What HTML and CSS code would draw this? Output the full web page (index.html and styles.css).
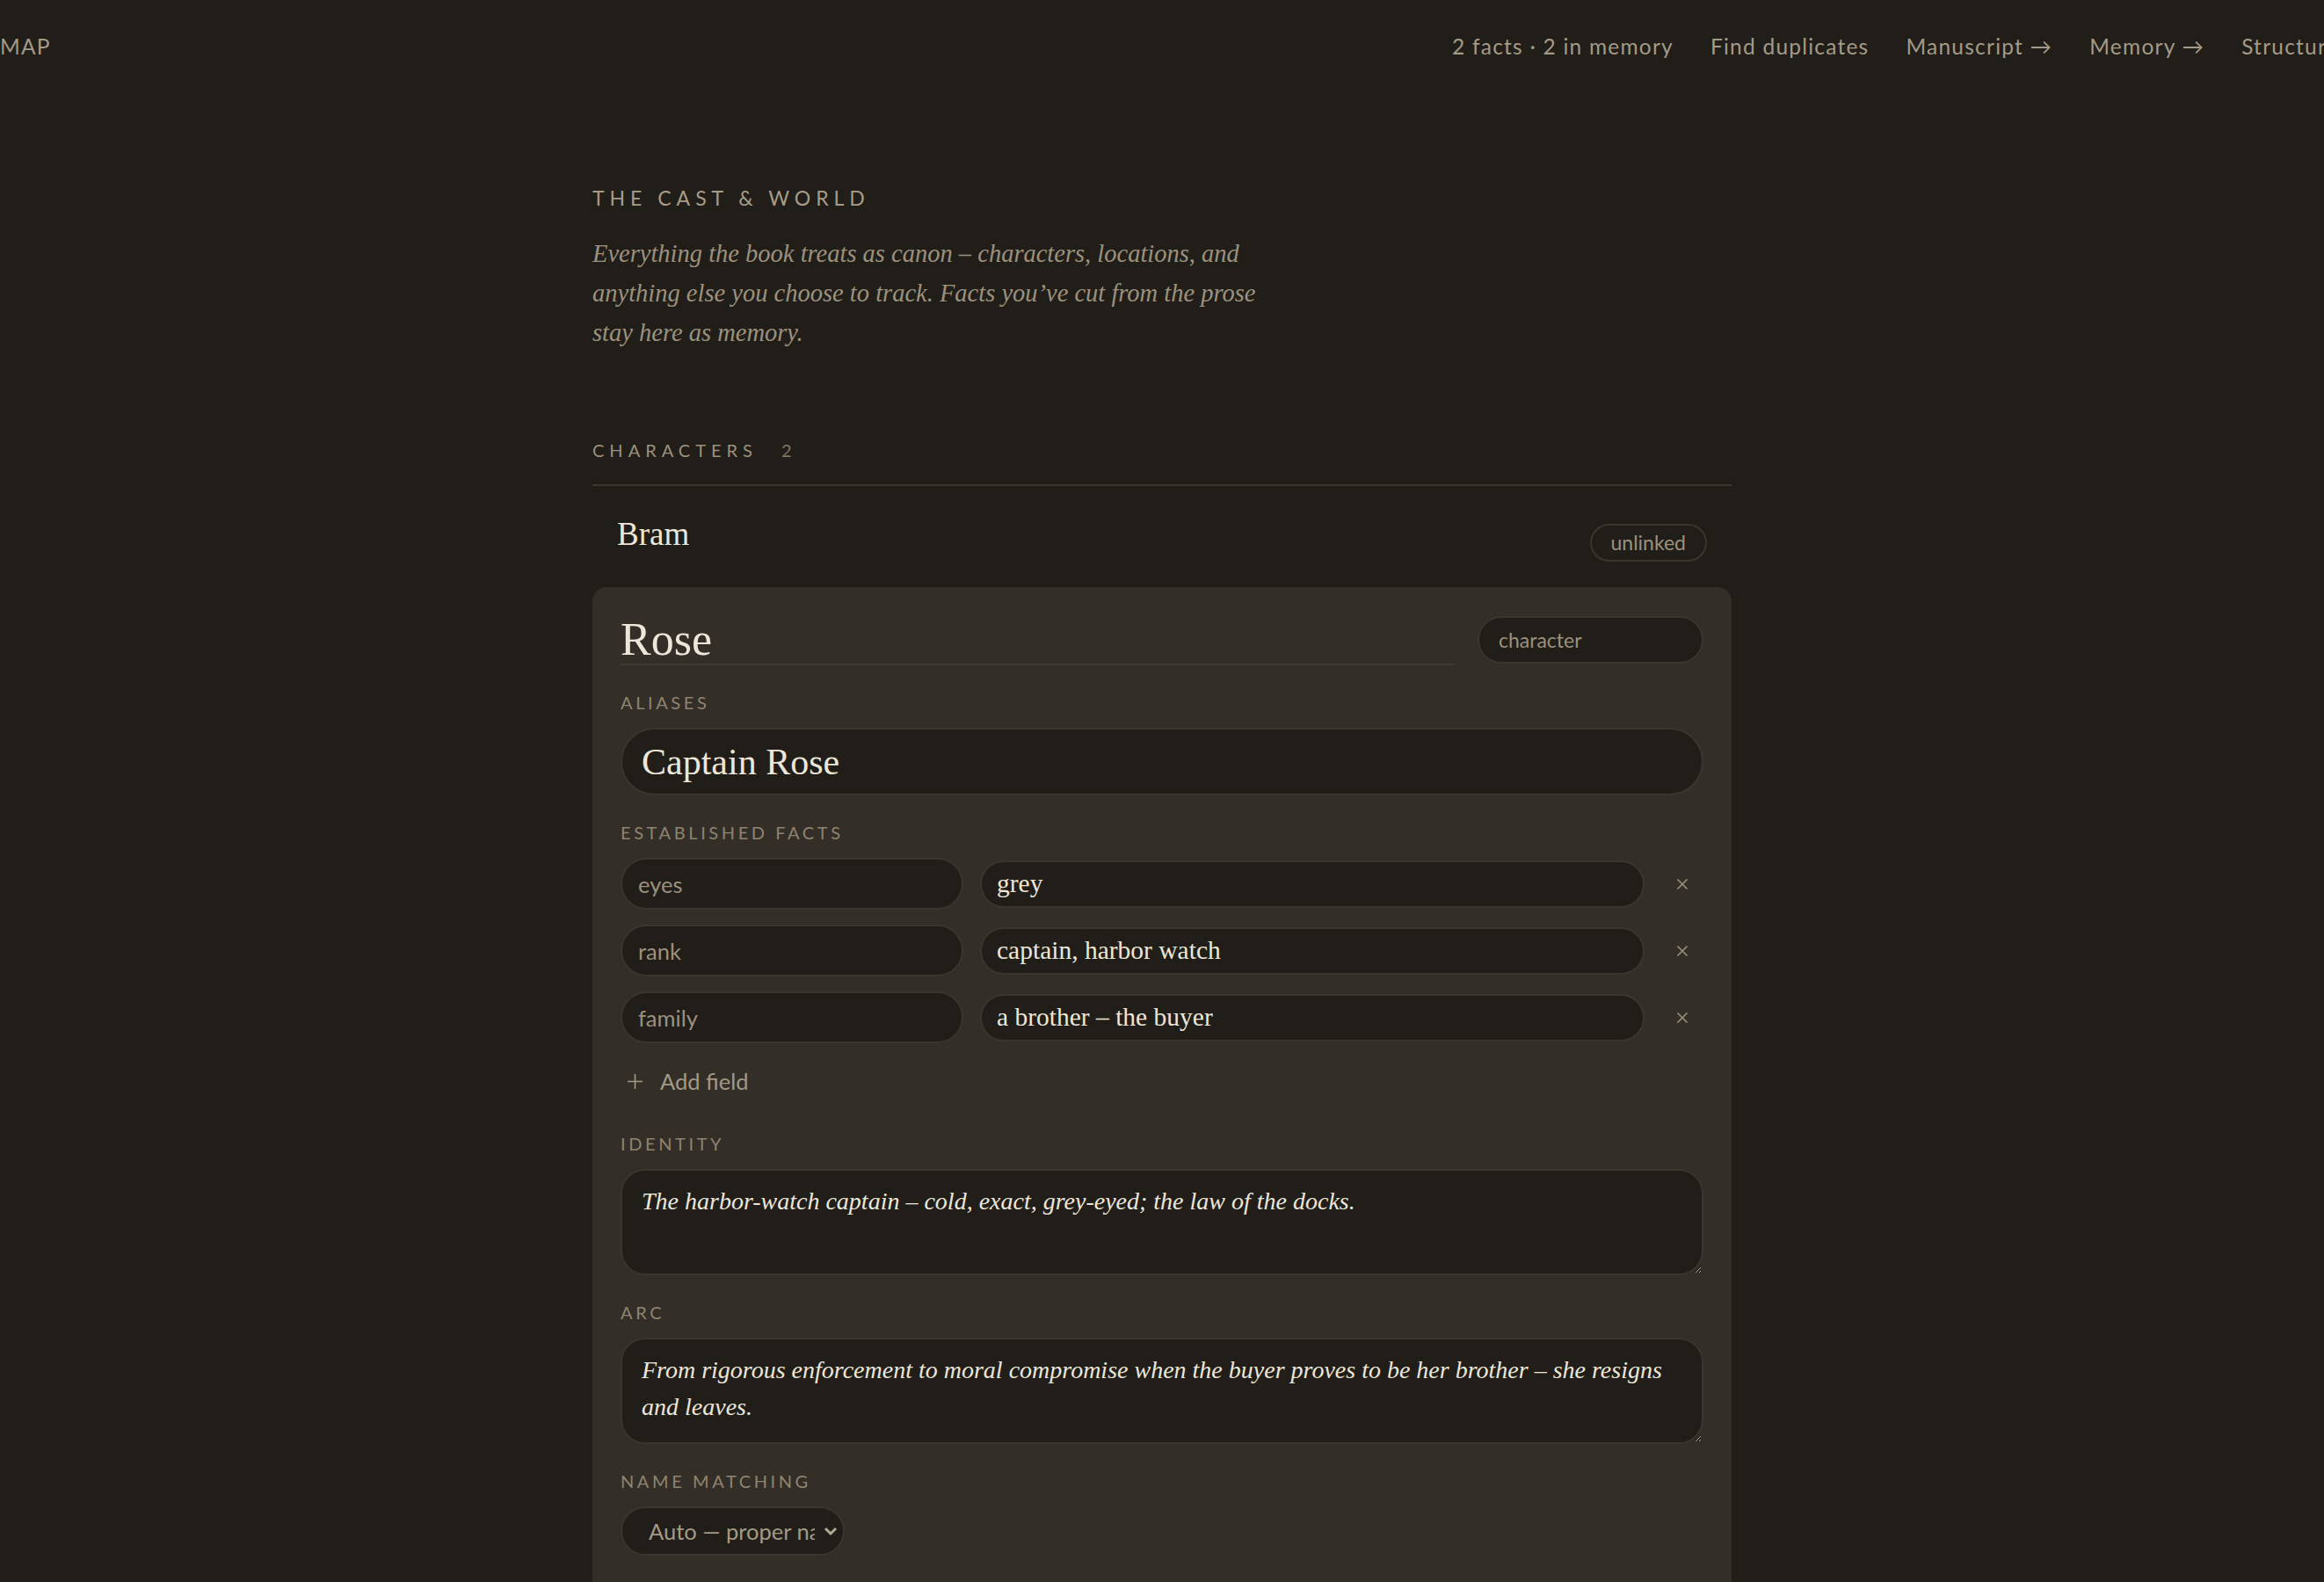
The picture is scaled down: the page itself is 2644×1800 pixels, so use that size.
FILE: index.html
```html
<!DOCTYPE html>
<html lang="en">
<head>
    <meta charset="UTF-8">
    <meta name="viewport" content="width=device-width, initial-scale=1.0">
    <title>Cast &amp; World</title>
    <link rel="stylesheet" href="styles.css">
</head>
<body>
    <header class="topbar">
        <span class="brand">MAP</span>
        <nav class="nav">
            <span class="nav-stat">2 facts · 2 in memory</span>
            <a href="#">Find duplicates</a>
            <a href="#">Manuscript →</a>
            <a href="#">Memory →</a>
            <a href="#">Structure →</a>
        </nav>
    </header>

    <main class="page">
        <section class="intro">
            <h1 class="eyebrow">The Cast &amp; World</h1>
            <p class="lede">Everything the book treats as canon – characters, locations, and anything else you choose to track. Facts you’ve cut from the prose stay here as memory.</p>
        </section>

        <section class="group">
            <h2 class="group-head">Characters <span class="count">2</span></h2>

            <div class="entity-row">
                <span class="entity-name">Bram</span>
                <span class="badge">unlinked</span>
            </div>

            <div class="entity-card">
                <div class="card-head">
                    <input class="name-input" type="text" value="Rose">
                    <select class="kind-select">
                        <option>character</option>
                        <option>location</option>
                        <option>other</option>
                    </select>
                </div>

                <div class="field">
                    <label class="field-label">Aliases</label>
                    <input class="alias-input" type="text" value="Captain Rose">
                </div>

                <div class="field">
                    <label class="field-label">Established facts</label>
                    <div class="fact-list">
                        <div class="fact">
                            <input class="fact-key" type="text" value="eyes">
                            <input class="fact-value" type="text" value="grey">
                            <button class="fact-remove" title="Remove">
                                <svg width="14" height="14" viewBox="0 0 14 14"><path d="M1.5 1.5l11 11M12.5 1.5l-11 11" stroke="currentColor" stroke-width="1.6" fill="none"/></svg>
                            </button>
                        </div>
                        <div class="fact">
                            <input class="fact-key" type="text" value="rank">
                            <input class="fact-value" type="text" value="captain, harbor watch">
                            <button class="fact-remove" title="Remove">
                                <svg width="14" height="14" viewBox="0 0 14 14"><path d="M1.5 1.5l11 11M12.5 1.5l-11 11" stroke="currentColor" stroke-width="1.6" fill="none"/></svg>
                            </button>
                        </div>
                        <div class="fact">
                            <input class="fact-key" type="text" value="family">
                            <input class="fact-value" type="text" value="a brother – the buyer">
                            <button class="fact-remove" title="Remove">
                                <svg width="14" height="14" viewBox="0 0 14 14"><path d="M1.5 1.5l11 11M12.5 1.5l-11 11" stroke="currentColor" stroke-width="1.6" fill="none"/></svg>
                            </button>
                        </div>
                    </div>
                    <button class="add-field">
                        <svg width="19" height="19" viewBox="0 0 19 19"><path d="M9.5 1v17M1 9.5h17" stroke="currentColor" stroke-width="1.6" fill="none"/></svg>
                        Add field
                    </button>
                </div>

                <div class="field field-wide">
                    <label class="field-label">Identity</label>
                    <textarea class="prose" rows="2">The harbor-watch captain – cold, exact, grey-eyed; the law of the docks.</textarea>
                </div>

                <div class="field">
                    <label class="field-label">Arc</label>
                    <textarea class="prose" rows="2">From rigorous enforcement to moral compromise when the buyer proves to be her brother – she resigns and leaves.</textarea>
                </div>

                <div class="field">
                    <label class="field-label">Name matching</label>
                    <div class="select-wrap">
                        <select class="match-select">
                            <option>Auto — proper names only</option>
                            <option>Exact only</option>
                            <option>Off</option>
                        </select>
                        <svg class="chevron" width="18" height="14" viewBox="0 0 18 14"><path d="M3 4l6 6 6-6" stroke="currentColor" stroke-width="3" fill="none"/></svg>
                    </div>
                </div>
            </div>
        </section>
    </main>
</body>
</html>
```

FILE: styles.css
```css
html, body {
    overflow-x: hidden;
}
body {
    margin: 0;
    background-color: #211e1a;
    color: #ece6d9;
    font-family: Lato, "Open Sans", sans-serif;
}

/* top bar */
.topbar {
    display: flex;
    justify-content: space-between;
    align-items: center;
    height: 104px;
    margin-right: -50px;
    font-size: 24.5px;
    letter-spacing: 0.05em;
    color: #a39a87;
}
.nav {
    display: flex;
    gap: 42px;
    white-space: nowrap;
}
.nav a {
    color: inherit;
    text-decoration: none;
}

/* page column */
.page {
    max-width: 1296px;
    margin: 0 auto;
    padding-top: 107px;
}
.eyebrow {
    margin: 0;
    font-size: 23px;
    font-weight: 400;
    line-height: 28px;
    letter-spacing: 0.26em;
    text-transform: uppercase;
    color: #a69c88;
}
.lede {
    margin: 27px 0 0;
    max-width: 770px;
    font-family: "Liberation Serif", serif;
    font-style: italic;
    font-size: 28.5px;
    line-height: 45px;
    color: #9b917d;
}

.group {
    margin-top: 99px;
}
.group-head {
    margin: 0;
    padding-bottom: 27px;
    border-bottom: 2px solid #3c382f;
    font-size: 20px;
    font-weight: 400;
    line-height: 24px;
    letter-spacing: 0.3em;
    text-transform: uppercase;
    color: #9b917d;
}
.group-head .count {
    margin-left: 16px;
    color: #7f7665;
}

.entity-row {
    display: flex;
    justify-content: space-between;
    align-items: flex-start;
    padding: 34px 28px 29px;
}
.entity-name {
    font-family: "Liberation Serif", serif;
    font-size: 37px;
    line-height: 41px;
    color: #ece6d9;
}
.badge {
    margin-top: 9px;
    padding: 0 22px;
    border: 2px solid #3a362e;
    border-radius: 22px;
    font-size: 23px;
    line-height: 39px;
    color: #9b917d;
}

/* expanded card */
.entity-card {
    background-color: #332e28;
    border-radius: 16px;
    padding: 32px 32px 60px;
}
.card-head {
    display: flex;
    align-items: flex-end;
    gap: 26px;
}
input, select, textarea, button {
    font: inherit;
    color: inherit;
}
.name-input {
    flex: 1;
    height: 57px;
    padding: 0;
    border: none;
    border-bottom: 2px solid #3f3a31;
    background: transparent;
    font-family: "Liberation Serif", serif;
    font-size: 52px;
    color: #ece6d9;
    outline: none;
    box-sizing: border-box;
}
.kind-select {
    width: 257px;
    height: 54px;
    margin-bottom: 2px;
    padding: 0 22px;
    border: 2px solid #3a352d;
    border-radius: 27px;
    background-color: #211e1a;
    font-size: 23px;
    color: #9b917d;
    appearance: none;
}

.field {
    margin-top: 30px;
}
.field-wide {
    margin-top: 38px;
}
.field-label {
    display: block;
    margin-bottom: 17px;
    font-size: 20px;
    line-height: 24px;
    letter-spacing: 0.18em;
    text-transform: uppercase;
    color: #8e8470;
}
.alias-input {
    display: block;
    width: 100%;
    height: 77px;
    padding: 0 22px;
    border: 2px solid #3a352d;
    border-radius: 39px;
    background-color: #211e1a;
    font-family: "Liberation Serif", serif;
    font-size: 42px;
    color: #ece6d9;
    box-sizing: border-box;
    outline: none;
}

.fact-list {
    display: flex;
    flex-direction: column;
    gap: 17px;
}
.fact {
    display: flex;
    align-items: center;
    gap: 19px;
}
.fact-key {
    width: 390px;
    height: 59px;
    padding: 0 18px;
    border: 2px solid #3a352d;
    border-radius: 30px;
    background-color: #211e1a;
    font-size: 25.5px;
    color: #9b917d;
    box-sizing: border-box;
    outline: none;
}
.fact-value {
    flex: 1;
    height: 54px;
    padding: 0 17px;
    border: 2px solid #3a352d;
    border-radius: 27px;
    background-color: #211e1a;
    font-family: "Liberation Serif", serif;
    font-size: 29.5px;
    color: #ece6d9;
    box-sizing: border-box;
    outline: none;
}
.fact-remove {
    display: flex;
    align-items: center;
    justify-content: center;
    width: 48px;
    height: 48px;
    padding: 0;
    border: none;
    background: none;
    color: #9b917d;
    cursor: pointer;
}

.add-field {
    display: flex;
    align-items: center;
    gap: 19px;
    margin-top: 22px;
    padding: 6px 7px;
    border: none;
    background: none;
    font-size: 25.5px;
    line-height: 30px;
    color: #a39a86;
    cursor: pointer;
}

.prose {
    display: block;
    width: 100%;
    padding: 14px 22px 19px;
    border: 2px solid #3a352d;
    border-radius: 28px;
    background-color: #211e1a;
    font-family: "Liberation Serif", serif;
    font-style: italic;
    font-size: 28px;
    line-height: 42px;
    color: #ece6d9;
    box-sizing: border-box;
    resize: vertical;
    outline: none;
}

.select-wrap {
    position: relative;
    display: inline-block;
}
.match-select {
    width: 255px;
    height: 56px;
    padding: 0 32px 0 30px;
    border: 2px solid #3a352d;
    border-radius: 28px;
    background-color: #211e1a;
    font-size: 25.5px;
    color: #a39a86;
    appearance: none;
}
.chevron {
    position: absolute;
    right: 7px;
    top: 21px;
    color: #b3aa96;
    pointer-events: none;
}
```
